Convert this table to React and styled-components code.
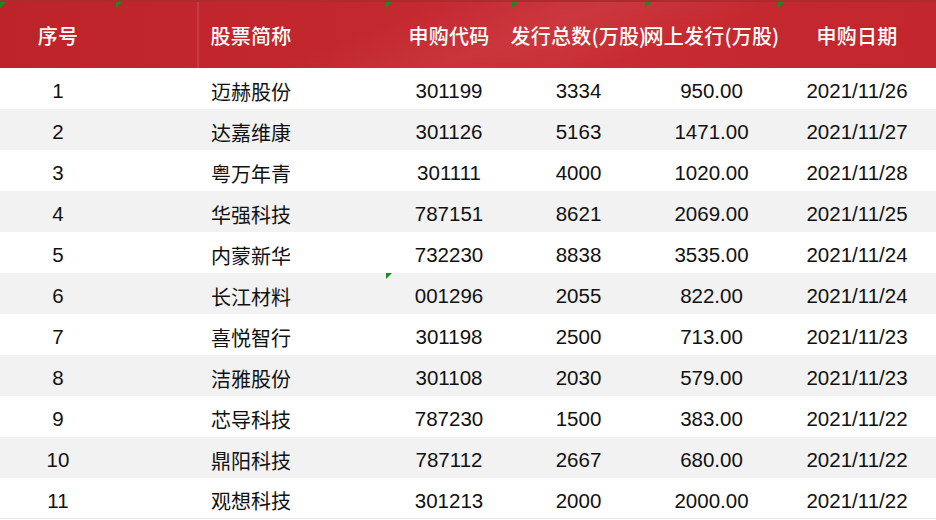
import styled, { createGlobalStyle } from 'styled-components';

const GlobalStyle = createGlobalStyle`
    html, body {
        margin: 0;
        padding: 0;
        background: #ffffff;
    }
    body {
        font-family: "Noto Sans CJK SC", "Liberation Sans", sans-serif;
    }
`;

const COLUMNS = '116px 270px 126px 133px 133px 158px';

const Sheet = styled.div`
    width: 936px;
    height: 520px;
    overflow: hidden;
    background: #ffffff;
`;

const HeaderRow = styled.div`
    display: grid;
    grid-template-columns: ${COLUMNS};
    height: 68px;
    border-top: 2px solid #ad2b2e;
    box-sizing: border-box;
    background:
        linear-gradient(90deg, transparent 197px, rgba(255, 255, 255, 0.1) 197px, rgba(255, 255, 255, 0.1) 199px, transparent 199px),
        linear-gradient(160deg, rgba(255, 255, 255, 0) 40%, rgba(255, 255, 255, 0.05) 55%, rgba(255, 255, 255, 0) 70%),
        linear-gradient(90deg, #bd2429 0%, #c2272d 35%, #c92d34 60%, #c4282e 85%, #c3272d 100%);
`;

const HeaderCell = styled.div`
    position: relative;
    display: flex;
    align-items: center;
    justify-content: center;
    padding-top: 1px;
    color: #ffffff;
    font-size: 20px;
    font-weight: 500;
    letter-spacing: 0.2px;
    white-space: nowrap;
`;

const Row = styled.div`
    display: grid;
    grid-template-columns: ${COLUMNS};
    height: 41px;
    background: ${p => (p.$striped ? '#f2f2f2' : '#ffffff')};
    border-bottom: ${p => (p.$last ? '1px solid #e6e6e6' : 'none')};
    box-sizing: border-box;
`;

const Cell = styled.div`
    position: relative;
    display: flex;
    align-items: center;
    justify-content: center;
    padding-top: 5px;
    color: #111111;
    font-size: ${p => (p.$num ? '20.5px' : '20px')};
    font-family: ${p => (p.$num ? '"Liberation Sans", "Noto Sans CJK SC", sans-serif' : '"Noto Sans CJK SC", sans-serif')};
    white-space: nowrap;
`;

// excel's little green "number stored as text" corner
const Flag = styled.span`
    position: absolute;
    left: 0;
    top: 0;
    width: 0;
    height: 0;
    border-top: 6px solid #1e8a1e;
    border-right: 6px solid transparent;
`;

const headers = ['序号', '股票简称', '申购代码', '发行总数(万股)', '网上发行(万股)', '申购日期'];

const rows = [
    ['1', '迈赫股份', '301199', '3334', '950.00', '2021/11/26'],
    ['2', '达嘉维康', '301126', '5163', '1471.00', '2021/11/27'],
    ['3', '粤万年青', '301111', '4000', '1020.00', '2021/11/28'],
    ['4', '华强科技', '787151', '8621', '2069.00', '2021/11/25'],
    ['5', '内蒙新华', '732230', '8838', '3535.00', '2021/11/24'],
    ['6', '长江材料', '001296', '2055', '822.00', '2021/11/24'],
    ['7', '喜悦智行', '301198', '2500', '713.00', '2021/11/23'],
    ['8', '洁雅股份', '301108', '2030', '579.00', '2021/11/23'],
    ['9', '芯导科技', '787230', '1500', '383.00', '2021/11/22'],
    ['10', '鼎阳科技', '787112', '2667', '680.00', '2021/11/22'],
    ['11', '观想科技', '301213', '2000', '2000.00', '2021/11/22'],
];

export default function App() {
    return (
        <Sheet>
            <GlobalStyle />
            <HeaderRow>
                {headers.map(h => (
                    <HeaderCell key={h}>
                        <Flag />
                        {h}
                    </HeaderCell>
                ))}
            </HeaderRow>
            {rows.map((r, i) => (
                <Row key={r[0]} $striped={i % 2 === 1} $last={i === rows.length - 1}>
                    {r.map((v, j) => (
                        <Cell key={j} $num={j !== 1}>
                            {i === 5 && j === 2 && <Flag />}
                            {v}
                        </Cell>
                    ))}
                </Row>
            ))}
        </Sheet>
    );
}
